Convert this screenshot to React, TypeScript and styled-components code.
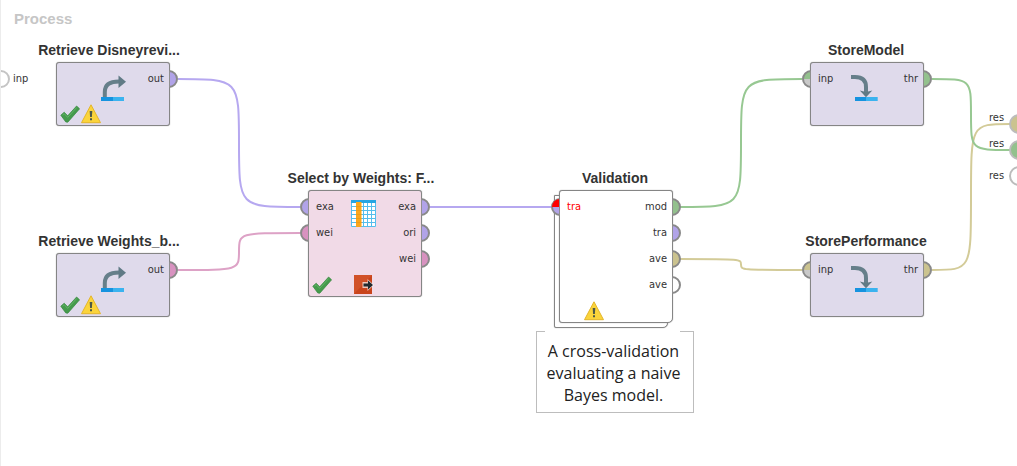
import React from "react";
import styled, { createGlobalStyle } from "styled-components";

const GlobalStyle = createGlobalStyle`
  *, *::before, *::after { box-sizing: border-box; }
  body { margin: 0; background: #ffffff; }
`;

const tone = {
  example: "#b1a3e8",
  weights: "#d892c0",
  model: "#93c18d",
  performance: "#cbc38f",
  empty: "#ffffff",
  idle: "#c9c9c9",
  error: "#ff0000",
};
type Tone = keyof typeof tone;

const wireTone: Record<string, string> = {
  example: "#b6a8f0",
  weights: "#dda2c6",
  model: "#97c892",
  performance: "#d3cb98",
};

const Canvas = styled.main`
  position: relative;
  min-height: 100vh;
  padding: 8px 14px;
  overflow: hidden;
  box-shadow: inset 1px 0 0 #ececec;
  background: #ffffff;
  color: #333333;
  font-family: "Liberation Sans", Arial, sans-serif;
`;

const ProcessName = styled.h1`
  margin: 0;
  color: #c6c6c6;
  font-size: 15px;
  font-weight: 700;
  line-height: 22px;
`;

const WireLayer = styled.svg`
  position: absolute;
  top: 0;
  left: 0;
  overflow: visible;
  fill: none;
  stroke-width: 2;
  pointer-events: none;
`;

const Operator = styled.section<{ $x: number; $y: number }>`
  position: absolute;
  z-index: 0;
  left: ${(p) => p.$x}px;
  top: ${(p) => p.$y}px;
  width: 114px;
  display: flex;
  flex-direction: column;
  align-items: center;
  gap: 2px;
`;

const OperatorName = styled.h2<{ $cut?: boolean }>`
  margin: 0;
  padding-right: ${(p) => (p.$cut ? 8 : 2)}px;
  font-size: 14px;
  font-weight: 700;
  line-height: 20px;
  white-space: nowrap;
`;

const Body = styled.div<{ $fill: string; $stacked?: boolean }>`
  position: relative;
  width: 100%;
  border: 1px solid #858585;
  border-radius: 3px;
  background: ${(p) => p.$fill};
  box-shadow: 0 0 1px #858585;

  ${(p) =>
    p.$stacked &&
    `
    border-radius: 3px 3px 5px 3px;
    &::before {
      content: "";
      position: absolute;
      z-index: -1;
      inset: 4px 4px -6px -6px;
      border: 1px solid #858585;
      border-radius: 1px 3px 5px 2px;
      background: #ffffff;
      box-shadow: 0 0 1px #858585;
    }
  `}
`;

const PortArea = styled.div`
  display: flex;
`;

const PortList = styled.ul`
  flex: 1;
  margin: 0;
  padding: 3px 0 0;
  list-style: none;
`;

const PortItem = styled.li<{ $side: "in" | "out"; $alert?: boolean }>`
  display: flex;
  flex-direction: ${(p) => (p.$side === "in" ? "row" : "row-reverse")};
  align-items: center;
  gap: ${(p) => (p.$side === "in" ? 7 : 5)}px;
  height: 26px;
  margin: ${(p) => (p.$side === "in" ? "0 0 0 -10px" : "0 -10px 0 0")};
  color: ${(p) => (p.$alert ? "#ff0000" : "#333333")};
`;

const PortLabel = styled.span`
  font-family: "DejaVu Sans Condensed", "DejaVu Sans", sans-serif;
  font-stretch: condensed;
  font-size: 11px;
  line-height: 14px;
`;

const PortShape = styled.svg`
  flex: none;
  display: block;
`;

const Glyph = styled.svg`
  flex: none;
  display: block;
`;

const StatusRow = styled.div`
  display: grid;
  grid-template-columns: repeat(3, 20px);
  gap: 1px;
  height: 24px;
  padding: 3px 3px 1px;
`;

const StatusSlot = styled.span<{ $slot: number }>`
  grid-column: ${(p) => p.$slot};
  display: flex;
`;

const Note = styled.p`
  position: absolute;
  left: 536px;
  top: 331px;
  width: 158px;
  margin: 0;
  padding: 9px 10px 6px 7px;
  border: 1px solid #bdbdbd;
  border-top: 0;
  color: #222222;
  font-family: "Open Sans", "Noto Sans", sans-serif;
  font-size: 16px;
  line-height: 22px;
  text-align: center;

  &::before,
  &::after {
    content: "";
    position: absolute;
    top: 0;
    border-top: 1px solid #bdbdbd;
  }
  &::before { left: 0; width: 8px; }
  &::after { right: 0; width: 13px; }
`;

const EdgePort = styled.div<{ $x: number; $y: number }>`
  position: absolute;
  left: ${(p) => p.$x}px;
  top: ${(p) => p.$y}px;
  display: flex;
  align-items: flex-start;
`;

const EdgeLabel = styled(PortLabel)<{ $drop: number }>`
  margin-top: ${(p) => p.$drop}px;
`;

function Port({ side, fill, upper }: { side: "in" | "out"; fill: Tone; upper?: Tone }) {
  const left = side === "in";
  const half = left ? "M10 1A8 8 0 0 0 10 17" : "M0 1A8 8 0 0 1 0 17";
  return (
    <PortShape width="10" height="18" viewBox="0 0 10 18" aria-hidden="true">
      <path d={half + "Z"} fill={tone[fill]} />
      {upper && upper !== "error" && <path d="M10 1A8 8 0 0 0 2 9H10Z" fill={tone[upper]} />}
      <path d={half} fill="none" stroke="#898989" strokeWidth="2" />
      {upper === "error" && <path d="M10 1A8 8 0 0 0 2 9H10Z" fill={tone.error} />}
      <path d={left ? "M9.500 1V17" : "M.5 1V17"} stroke="#8f8f8f" />
    </PortShape>
  );
}

function RetrieveGlyph() {
  return (
    <Glyph width="32" height="38" viewBox="0 0 32 38" aria-hidden="true">
      <path d="M7.800 34V29C7.800 22 12 18.600 22 18.600" fill="none" stroke="#667f8a" strokeWidth="4" />
      <path d="M21.500 12.500L29 18.700L21.500 25Z" fill="#607a85" />
      <path d="M4 34H16V38H4Z" fill="#1693df" />
      <path d="M16 34H27V38H16Z" fill="#3bb3ef" />
    </Glyph>
  );
}

function StoreGlyph() {
  return (
    <Glyph width="32" height="38" viewBox="0 0 32 38" aria-hidden="true">
      <path d="M0 14H4C12 14 15 18 15 24V29" fill="none" stroke="#667f8a" strokeWidth="4" />
      <path d="M8.800 27.500L15 29L21.300 27.500L15 34.300Z" fill="#607a85" />
      <path d="M4 34H15V38H4Z" fill="#1693df" />
      <path d="M15 34H26.700V38H15Z" fill="#3bb3ef" />
    </Glyph>
  );
}

function TableGlyph() {
  return (
    <Glyph width="32" height="38" viewBox="0 0 32 38" aria-hidden="true">
      <path d="M2 9H27V36H2Z" fill="#ffffff" />
      <path d="M2.500 11V35.500H26.500V11M2 15.500H27M2 19.500H27M2 23.500H27M2 27.500H27M2 31.500H27M14.500 11V36M18.500 11V36M22.500 11V36" fill="none" stroke="#55bdec" />
      <path d="M2 9H27V12H2Z" fill="#27a5e2" />
      <path d="M7 11H12.500V36H7Z" fill="#fba71b" />
      <path d="M7 15.500H12.500M7 19.500H12.500M7 23.500H12.500M7 27.500H12.500M7 31.500H12.500" stroke="#ef9a19" />
    </Glyph>
  );
}

function CheckIcon() {
  return (
    <svg width="20" height="20" viewBox="0 0 20 20" role="img" aria-label="Ready">
      <path d="M.8 11.200L4.200 8.200L7.700 11.800L16.600 2L19.600 4.800L7.800 18.200L5.800 18Z" fill="#459b4c" stroke="#37863f" strokeWidth=".7" strokeLinejoin="round" />
      <path d="M2.500 11.200L4.200 9.700L7.700 13.400L16.700 3.500" fill="none" stroke="#62b567" />
    </svg>
  );
}

function WarningIcon() {
  return (
    <svg width="20" height="20" viewBox="0 0 20 20" role="img" aria-label="Warning">
      <path d="M10 .8L19.500 18.700H.5Z" fill="#fbd43b" stroke="#e3b52a" strokeLinejoin="round" />
      <path d="M8.700 7H11.300L10.900 13H9.100Z" fill="#4e5947" />
      <path d="M9 14.300H11V16.300H9Z" fill="#4e5947" />
    </svg>
  );
}

function ExitIcon() {
  return (
    <svg width="20" height="20" viewBox="0 0 20 20" role="img" aria-label="Breakpoint after">
      <path d="M0 0H18V19H0Z" fill="#c9441c" />
      <path d="M0 0H18L0 19Z" fill="#d15128" />
      <path d="M8.500 7H13.500V4L20 10L13.500 16V13H8.500Z" fill="#ffffff" opacity=".7" />
      <path d="M9.500 8.500H14V5.500L19 10L14 14.500V11.500H9.500Z" fill="#202a30" />
    </svg>
  );
}

type PortSpec = { label: string; fill: Tone; upper?: Tone; alert?: boolean };
type Status = "check" | "warning" | "exit";

type OperatorSpec = {
  name: string;
  cut?: boolean;
  x: number;
  y: number;
  fill: string;
  stacked?: boolean;
  glyph?: "retrieve" | "store" | "table";
  inputs: PortSpec[];
  outputs: PortSpec[];
  status: Status[];
};

const LILAC = "#dfdaeb";

const operators: OperatorSpec[] = [
  {
    name: "Retrieve Disneyrevi...", cut: true, x: 56, y: 40, fill: LILAC, glyph: "retrieve",
    inputs: [], outputs: [{ label: "out", fill: "example" }], status: ["check", "warning"],
  },
  {
    name: "Retrieve Weights_b...", cut: true, x: 56, y: 231, fill: LILAC, glyph: "retrieve",
    inputs: [], outputs: [{ label: "out", fill: "weights" }], status: ["check", "warning"],
  },
  {
    name: "Select by Weights: F...", cut: true, x: 308, y: 168, fill: "#f1dae7", glyph: "table",
    inputs: [{ label: "exa", fill: "example" }, { label: "wei", fill: "weights" }],
    outputs: [
      { label: "exa", fill: "example" },
      { label: "ori", fill: "example" },
      { label: "wei", fill: "weights" },
    ],
    status: ["check", "exit"],
  },
  {
    name: "Validation", x: 559, y: 168, fill: "#ffffff", stacked: true,
    inputs: [{ label: "tra", fill: "example", upper: "error", alert: true }],
    outputs: [
      { label: "mod", fill: "model" },
      { label: "tra", fill: "example" },
      { label: "ave", fill: "performance" },
      { label: "ave", fill: "empty" },
    ],
    status: ["warning"],
  },
  {
    name: "StoreModel", x: 810, y: 40, fill: LILAC, glyph: "store",
    inputs: [{ label: "inp", fill: "idle", upper: "model" }],
    outputs: [{ label: "thr", fill: "model" }], status: [],
  },
  {
    name: "StorePerformance", x: 810, y: 231, fill: LILAC, glyph: "store",
    inputs: [{ label: "inp", fill: "idle", upper: "performance" }],
    outputs: [{ label: "thr", fill: "performance" }], status: [],
  },
];

const glyphs = { retrieve: RetrieveGlyph, store: StoreGlyph, table: TableGlyph };
const statusIcons = {
  check: { slot: 1, Icon: CheckIcon },
  warning: { slot: 2, Icon: WarningIcon },
  exit: { slot: 3, Icon: ExitIcon },
};

const wires: { from: [number, number]; to: [number, number]; kind: string }[] = [
  { from: [178, 79], to: [300, 207], kind: "example" },
  { from: [178, 270], to: [300, 233], kind: "weights" },
  { from: [430, 207], to: [551, 207], kind: "example" },
  { from: [680, 207], to: [802, 79], kind: "model" },
  { from: [680, 259], to: [802, 270], kind: "performance" },
  { from: [932, 270], to: [1010, 124], kind: "performance" },
  { from: [932, 79], to: [1010, 150], kind: "model" },
];

// Each wire bends twice, with both control points of a bend on its corner.
function wirePath([x1, y1]: [number, number], [x2, y2]: [number, number]) {
  const mx = (x1 + x2) / 2;
  const my = (y1 + y2) / 2;
  return `M${x1} ${y1}C${mx} ${y1} ${mx} ${y1} ${mx} ${my}C${mx} ${y2} ${mx} ${y2} ${x2} ${y2}`;
}

const results: { y: number; drop: number; fill: Tone }[] = [
  { y: 114, drop: -3, fill: "performance" },
  { y: 140, drop: -3, fill: "model" },
  { y: 166, drop: 3, fill: "empty" },
];

function Ports({ side, ports }: { side: "in" | "out"; ports: PortSpec[] }) {
  return (
    <PortList>
      {ports.map((port, i) => (
        <PortItem key={i} $side={side} $alert={port.alert}>
          <Port side={side} fill={port.fill} upper={port.upper} />
          <PortLabel>{port.label}</PortLabel>
        </PortItem>
      ))}
    </PortList>
  );
}

function OperatorNode({ op }: { op: OperatorSpec }) {
  const Picture = op.glyph ? glyphs[op.glyph] : null;
  return (
    <Operator $x={op.x} $y={op.y}>
      <OperatorName $cut={op.cut}>{op.name}</OperatorName>
      <Body $fill={op.fill} $stacked={op.stacked}>
        <PortArea>
          <Ports side="in" ports={op.inputs} />
          {Picture && <Picture />}
          <Ports side="out" ports={op.outputs} />
        </PortArea>
        <StatusRow>
          {op.status.map((s) => {
            const { slot, Icon } = statusIcons[s];
            return (
              <StatusSlot key={s} $slot={slot}>
                <Icon />
              </StatusSlot>
            );
          })}
        </StatusRow>
      </Body>
    </Operator>
  );
}

export default function App() {
  return (
    <>
      <GlobalStyle />
      <Canvas>
        <ProcessName>Process</ProcessName>
        <WireLayer width="100%" height="100%" aria-hidden="true">
          {wires.map((w, i) => (
            <path key={i} d={wirePath(w.from, w.to)} stroke={wireTone[w.kind]} />
          ))}
        </WireLayer>

        <EdgePort $x={0} $y={70}>
          <PortShape width="13" height="18" viewBox="0 0 13 18" aria-hidden="true">
            <path d="M1 1A8 8 0 0 1 1 17" fill="#ffffff" stroke="#c4c4c4" strokeWidth="2" />
          </PortShape>
          <EdgeLabel $drop={2}>inp</EdgeLabel>
        </EdgePort>

        {operators.map((op) => (
          <OperatorNode key={op.name} op={op} />
        ))}

        {results.map((r) => (
          <EdgePort key={r.y} $x={989} $y={r.y}>
            <EdgeLabel $drop={r.drop}>res</EdgeLabel>
            <PortShape width="24" height="20" viewBox="0 0 24 20" aria-hidden="true">
              <circle cx="15" cy="10" r="9" fill={tone[r.fill]} stroke="#bcbcbc" strokeWidth="2" />
            </PortShape>
          </EdgePort>
        ))}

        <Note>A cross-validation evaluating a naive Bayes model.</Note>
      </Canvas>
    </>
  );
}
